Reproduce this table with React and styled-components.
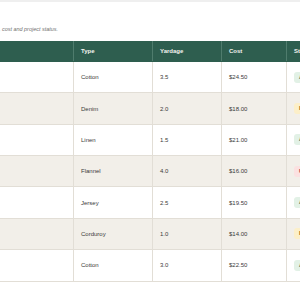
import React from 'react'
import styled, {createGlobalStyle} from 'styled-components'

const GlobalStyle = createGlobalStyle`
  html, body {
    margin: 0;
    padding: 0;
    background: #ffffff;
    overflow: hidden;
  }
  body {
    font-family: 'Liberation Sans', Arial, sans-serif;
    color: #333;
  }
  #root {
    display: flex;
    justify-content: center;
  }
`

const Page = styled.div`
  flex: 0 0 auto;
  width: 720px;
  box-sizing: border-box;
  padding: 10px 20px 20px;
  border-top: 2px solid #efefef;
`

const Header = styled.header`
  display: flex;
  flex-direction: column;
  margin-bottom: 8px;
`

const Title = styled.h1`
  margin: 0;
  font-size: 10px;
  line-height: 13px;
  font-weight: 700;
  color: #1f3d33;
`

const Subtitle = styled.p`
  margin: 0;
  font-size: 5.45px;
  line-height: 8px;
  font-style: italic;
  color: #6f6f6f;
`

const Table = styled.table`
  width: 680px;
  border-collapse: collapse;
  table-layout: fixed;
  font-size: 6px;
`

const Th = styled.th`
  background: #2e5e4f;
  color: #f4f4f0;
  font-weight: 700;
  text-align: left;
  height: 20px;
  padding: 0 7px;
  border-right: 1px solid #4f7c6d;
  border-bottom: 1px solid #2e5e4f;
  width: ${(p) => p.$w};
`

const Row = styled.tr`
  background: ${(p) => (p.$alt ? '#f2efe9' : '#ffffff')};
`

const Td = styled.td`
  height: 30.36px;
  padding: 0 7px;
  color: #3a3a3a;
  border-right: 1px solid #e2ded6;
  border-bottom: 1px solid #e2ded6;
  white-space: nowrap;
  overflow: hidden;
`

const badgeColors = {
  Active: {bg: '#e2f1e6', fg: '#2d6a4f'},
  'In use': {bg: '#fcefc9', fg: '#9a6a00'},
  'Used up': {bg: '#fbe1e1', fg: '#b23b3b'},
}

const Badge = styled.span`
  display: inline-block;
  padding: 2px 5px;
  border-radius: 3px;
  font-size: 5.5px;
  line-height: 7px;
  font-weight: 700;
  background: ${(p) => badgeColors[p.$status].bg};
  color: ${(p) => badgeColors[p.$status].fg};
`

const fabrics = [
  {name: 'Sunflower Quilting Print', type: 'Cotton', yards: '3.5', cost: '$24.50', status: 'Active', project: 'Summer quilt'},
  {name: 'Dark Wash Selvedge', type: 'Denim', yards: '2.0', cost: '$18.00', status: 'In use', project: 'Tote bag'},
  {name: 'Natural Oatmeal', type: 'Linen', yards: '1.5', cost: '$21.00', status: 'Active', project: 'Napkins'},
  {name: 'Red Buffalo Plaid', type: 'Flannel', yards: '4.0', cost: '$16.00', status: 'Used up', project: 'Pajamas'},
  {name: 'Heather Grey Knit', type: 'Jersey', yards: '2.5', cost: '$19.50', status: 'Active', project: 'T-shirt'},
  {name: 'Mustard Wide Wale', type: 'Corduroy', yards: '1.0', cost: '$14.00', status: 'In use', project: 'Skirt'},
  {name: 'Navy Ditsy Floral', type: 'Cotton', yards: '3.0', cost: '$22.50', status: 'Active', project: 'Dress'},
]

// widths are content widths; each cell adds 14px of padding
const App = () => {
  return (
    <>
      <GlobalStyle />
      <Page>
        <Header>
          <Title>Fabric Stash</Title>
          <Subtitle>
            A running inventory of every fabric in the stash, tracked by fabric type, yardage, cost and project status.
          </Subtitle>
        </Header>
        <Table>
          <thead>
            <tr>
              <Th $w='249px'>Fabric</Th>
              <Th $w='64px'>Type</Th>
              <Th $w='54px'>Yardage</Th>
              <Th $w='50px'>Cost</Th>
              <Th $w='79px'>Status</Th>
              <Th $w='100px'>Project</Th>
            </tr>
          </thead>
          <tbody>
            {fabrics.map((f, index) => (
              <Row key={index} $alt={index % 2 === 1}>
                <Td>{f.name}</Td>
                <Td>{f.type}</Td>
                <Td>{f.yards}</Td>
                <Td>{f.cost}</Td>
                <Td>
                  <Badge $status={f.status}>{f.status}</Badge>
                </Td>
                <Td>{f.project}</Td>
              </Row>
            ))}
          </tbody>
        </Table>
      </Page>
    </>
  )
}

export default App
